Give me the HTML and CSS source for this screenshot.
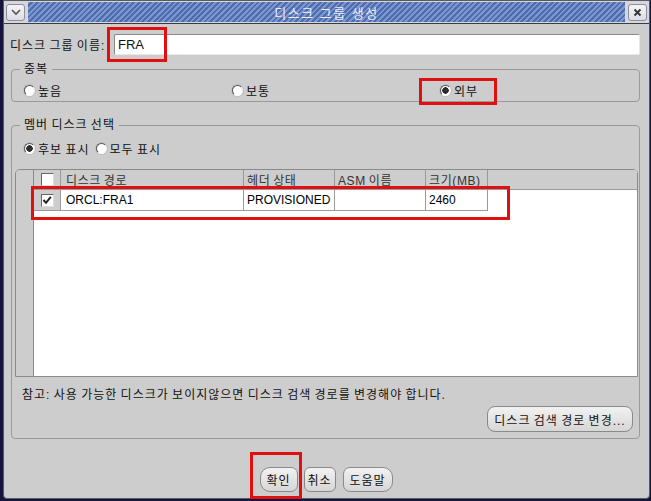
FILE: index.html
```html
<!DOCTYPE html>
<html>
<head>
  <meta charset="utf-8">
  <title>디스크 그룹 생성</title>
  <link rel="stylesheet" href="styles.css">
</head>
<body>
  <div class="window">
    <div class="titlebar">
      <div class="tb-btn">
        <svg width="10" height="8" viewBox="0 0 10 8"><path d="M1 2 L5 6 L9 2" fill="none" stroke="#555" stroke-width="1.6"/></svg>
      </div>
      <div class="tb-stripes"><span class="tb-title">디스크 그룹 생성</span></div>
      <div class="tb-btn">
        <svg width="9" height="9" viewBox="0 0 9 9"><path d="M1.5 1.5 L7.5 7.5 M7.5 1.5 L1.5 7.5" stroke="#333" stroke-width="1.8"/></svg>
      </div>
    </div>

    <div class="content">
      <div class="name-row">
        <label class="name-label">디스크 그룹 이름:</label>
        <div class="textfield">FRA</div>
      </div>

      <fieldset class="group redundancy">
        <legend>중복</legend>
        <div class="radio-grid">
          <span class="radio"><i class="circle"></i>높음</span>
          <span class="radio"><i class="circle"></i>보통</span>
          <span class="radio"><i class="circle checked"></i>외부</span>
        </div>
      </fieldset>

      <fieldset class="group members">
        <legend>멤버 디스크 선택</legend>
        <div class="radio-row">
          <span class="radio"><i class="circle checked"></i>후보 표시</span>
          <span class="radio"><i class="circle"></i>모두 표시</span>
        </div>

        <div class="table">
          <div class="rowhead"></div>
          <div class="grid">
            <div class="row head">
              <div class="cell c-check"><span class="checkbox"></span></div>
              <div class="cell c-path">디스크 경로</div>
              <div class="cell c-header">헤더 상태</div>
              <div class="cell c-asm">ASM 이름</div>
              <div class="cell c-size">크기(MB)</div>
            </div>
            <div class="row data">
              <div class="cell c-check"><span class="checkbox">
                <svg width="10" height="10" viewBox="0 0 10 10"><path d="M1.5 5 L4 7.8 L8.8 1.8" fill="none" stroke="#222" stroke-width="2"/></svg>
              </span></div>
              <div class="cell c-path">ORCL:FRA1</div>
              <div class="cell c-header">PROVISIONED</div>
              <div class="cell c-asm"></div>
              <div class="cell c-size">2460</div>
            </div>
          </div>
        </div>

        <p class="note">참고: 사용 가능한 디스크가 보이지않으면 디스크 검색 경로를 변경해야 합니다.</p>
        <div class="change-row">
          <button class="btn btn-change">디스크 검색 경로 변경...</button>
        </div>
      </fieldset>

      <div class="actions">
        <button class="btn btn-ok">확인</button>
        <button class="btn btn-cancel">취소</button>
        <button class="btn btn-help">도움말</button>
      </div>
    </div>

    <!-- red annotation boxes -->
    <div class="mark mark-name"></div>
    <div class="mark mark-ext"></div>
    <div class="mark mark-row"></div>
    <div class="mark mark-ok"></div>
  </div>
</body>
</html>
```

FILE: styles.css
```css
body {
  margin: 0;
  background-color: #14143c;
  font-family: "Liberation Sans", "Noto Sans CJK KR", sans-serif;
  font-size: 12px;
  letter-spacing: 1px;
  word-spacing: -1px;
  color: #111;
}

.window {
  position: relative;
  margin-left: 3px;
  width: 645px;
  height: 497px;
  background-color: #cdcdcd;
  border: 1px solid #5a5a5a;
  border-radius: 0 0 4px 4px;
}

/* title bar */
.titlebar {
  display: flex;
  align-items: center;
  height: 22px;
  padding: 0 2px;
  background-color: #d6d6de;
  border-bottom: 1px solid #3c3c3c;
}
.tb-btn {
  width: 17px;
  height: 15px;
  display: flex;
  align-items: center;
  justify-content: center;
  border: 1px solid #8e8e9a;
  border-radius: 3px;
  background: linear-gradient(#f4f4f8, #dcdce4);
}
.tb-stripes {
  flex: 1;
  height: 20px;
  margin: 0 3px;
  display: flex;
  align-items: center;
  justify-content: center;
  background: repeating-linear-gradient(135deg, #7a97d0 0, #7a97d0 2px, #4e6cae 2px, #4e6cae 4px);
}
.tb-title {
  color: #e6ecfa;
  font-size: 13px;
  letter-spacing: 1.5px;
  word-spacing: 0;
}

/* content */
.content {
  padding: 0 9px 0 7px;
}
.name-row {
  display: flex;
  align-items: center;
  margin-top: 10px;
}
.name-label {
  margin-left: -1px;
  width: 104px;
  white-space: nowrap;
}
.textfield {
  flex: 1;
  height: 19px;
  line-height: 19px;
  padding-left: 3px;
  background-color: #fff;
  border: 1px solid #8a8a8a;
  border-right-color: #e8e8e8;
  border-bottom-color: #e8e8e8;
  border-radius: 2px;
  font-size: 13px;
  letter-spacing: 0;
}

.group {
  margin: 0;
  padding: 0;
  border: 1px solid #9a9a9a;
  border-radius: 4px;
}
.group legend {
  margin-left: 8px;
  padding: 0 4px;
  line-height: 14px;
}
.redundancy {
  margin-top: 7px;
  padding-bottom: 3px;
}
.radio-grid {
  display: grid;
  grid-template-columns: 208px 208px 1fr;
  margin-top: 6px;
}
.radio {
  display: inline-flex;
  align-items: center;
  height: 16px;
  padding-left: 12px;
}
.circle {
  width: 9px;
  height: 9px;
  margin-right: 3px;
  border-radius: 50%;
  background-color: #fff;
  border: 1px solid;
  border-color: #555 #eee #fff #555;
  box-shadow: 0 0 0 1px #bdbdbd;
}
.circle.checked {
  background: radial-gradient(circle, #2e2e2e 0, #2e2e2e 3px, #fff 3.5px);
}

.members {
  margin-top: 16px;
  padding-bottom: 6px;
}
.radio-row {
  display: flex;
  margin-top: 8px;
}
.radio-row .radio + .radio {
  padding-left: 6px;
}

/* disk table */
.table {
  display: flex;
  height: 206px;
  margin: 13px 1px 0 3px;
  border: 1px solid #8a8a8a;
  border-radius: 5px 5px 0 0;
  overflow: hidden;
}
.rowhead {
  width: 17px;
  background-color: #cdcdcd;
  border-right: 1px solid #8a8a8a;
}
.grid {
  flex: 1;
  background-color: #fff;
}
.row {
  display: flex;
}
.row.head {
  height: 19px;
  background-color: #cdcdcd;
  border-bottom: 1px solid #9a9a9a;
  color: #333;
  letter-spacing: 0.6px;
}
.row.data {
  height: 21px;
}
.cell {
  display: flex;
  align-items: center;
  padding-left: 5px;
  border-right: 1px solid #9a9a9a;
  box-sizing: border-box;
  white-space: nowrap;
}
.row.data .cell {
  border-bottom: 1px solid #9a9a9a;
  color: #000;
  letter-spacing: 0;
}
.c-check { width: 27px; justify-content: center; padding-left: 0; }
.c-path { width: 183px; }
.c-header { width: 91px; padding-left: 3px; }
.c-asm { width: 91px; padding-left: 3px; }
.c-size { width: 62px; padding-left: 3px; }
.row.data .c-check { background-color: #cdcdcd; }

.checkbox {
  width: 11px;
  height: 11px;
  display: flex;
  align-items: center;
  justify-content: center;
  background-color: #fff;
  border: 1px solid;
  border-color: #666 #ddd #ddd #666;
}

.note {
  margin: 11px 0 0 10px;
  line-height: 14px;
}
.change-row {
  display: flex;
  justify-content: flex-end;
  margin: 4px 6px 0 0;
}
.btn {
  height: 26px;
  padding: 0;
  font-family: inherit;
  font-size: 12px;
  letter-spacing: 1px;
  word-spacing: -1px;
  color: #111;
  background: linear-gradient(#f2f2f2, #d6d6d6);
  border: 1px solid #8a8a8a;
  border-radius: 8px;
  white-space: nowrap;
}
.btn-change { width: 146px; }

.actions {
  display: flex;
  justify-content: center;
  margin-top: 28px;
  padding-left: 1px;
}
.actions .btn {
  height: 25px;
}
.btn-ok { width: 38px; border-radius: 10px 7px 7px 10px; }
.btn-cancel { width: 32px; margin-left: 6px; border-radius: 6px; }
.btn-help { width: 50px; margin-left: 7px; border-radius: 7px 10px 10px 7px; }

/* red annotation boxes */
.mark {
  position: absolute;
  border: 3px solid #e01010;
  box-sizing: border-box;
}
.mark-name { left: 103px; top: 26px; width: 60px; height: 35px; }
.mark-ext { left: 415px; top: 77px; width: 78px; height: 27px; }
.mark-row { left: 27px; top: 185px; width: 479px; height: 34px; }
.mark-ok { left: 246px; top: 451px; width: 52px; height: 47px; }
```
